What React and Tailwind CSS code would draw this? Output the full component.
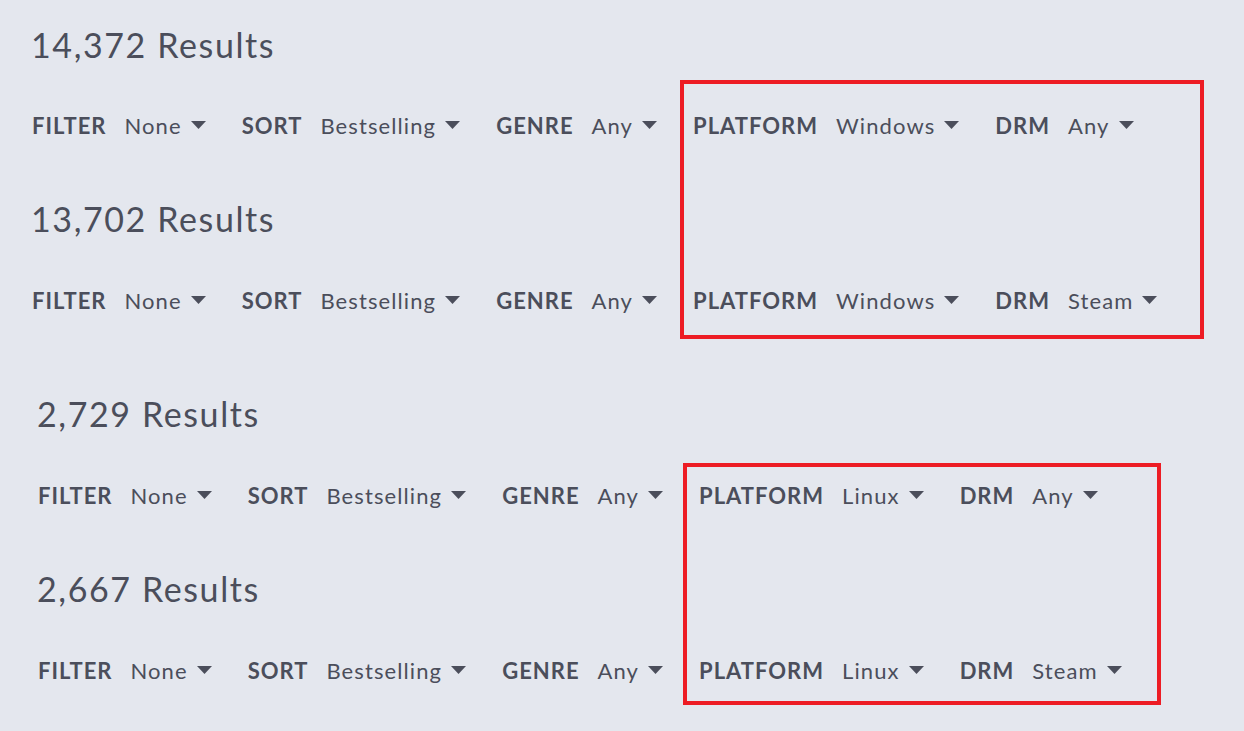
import React from "react";

function Arrow() {
  return (
    <svg width="15" height="8" viewBox="0 0 15 8" className="shrink-0">
      <path d="M0 0 H15 L7.5 8 Z" fill="#4b4e5b" />
    </svg>
  );
}

function Filter({ label, value }) {
  return (
    <div className="flex items-center mr-[36px]">
      <span className="font-bold text-[22px] tracking-[1px]">{label}</span>
      <span className="ml-[18px] text-[22px] tracking-[1.1px]">{value}</span>
      <span className="ml-[9px]">
        <Arrow />
      </span>
    </div>
  );
}

function Row({ platform, drm, className }) {
  return (
    <div className={"flex items-center h-[32px] " + className}>
      <Filter label="FILTER" value="None" />
      <Filter label="SORT" value="Bestselling" />
      <Filter label="GENRE" value="Any" />
      <Filter label="PLATFORM" value={platform} />
      <Filter label="DRM" value={drm} />
    </div>
  );
}

function Heading({ children, className }) {
  return (
    <div className={"h-[40px] flex items-center text-[34px] tracking-[1.6px] " + className}>
      {children}
    </div>
  );
}

export default function App() {
  return (
    <div
      className="relative w-[1244px] h-[731px] overflow-hidden bg-[#e4e7ee] text-[#4b4e5b]"
      style={{ fontFamily: "Lato, 'Open Sans', sans-serif" }}
    >
      <div className="flex flex-col pl-[32px] pt-[24px]">
        <Heading className="-ml-[1px]">14,372 Results</Heading>
        <Row platform="Windows" drm="Any" className="mt-[45px]" />
        <Heading className="mt-[57px] -ml-[1px]">13,702 Results</Heading>
        <Row platform="Windows" drm="Steam" className="mt-[46px]" />
      </div>
      <div className="flex flex-col pl-[38px] mt-[77px]">
        <Heading className="-ml-[1px]">2,729 Results</Heading>
        <Row platform="Linux" drm="Any" className="mt-[46px]" />
        <Heading className="mt-[57px] -ml-[1px]">2,667 Results</Heading>
        <Row platform="Linux" drm="Steam" className="mt-[46px]" />
      </div>
      <div className="absolute left-[680px] top-[80px] w-[524px] h-[259px] border-4 border-[#ed1c24]" />
      <div className="absolute left-[683px] top-[463px] w-[478px] h-[242px] border-4 border-[#ed1c24]" />
    </div>
  );
}
